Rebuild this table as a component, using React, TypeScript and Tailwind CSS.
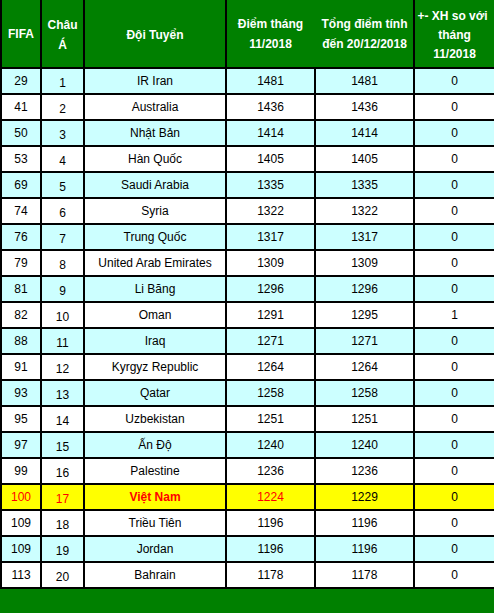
const ROWS = [
  ["29", "1", "IR Iran", "1481", "1481", "0"],
  ["41", "2", "Australia", "1436", "1436", "0"],
  ["50", "3", "Nhật Bản", "1414", "1414", "0"],
  ["53", "4", "Hàn Quốc", "1405", "1405", "0"],
  ["69", "5", "Saudi Arabia", "1335", "1335", "0"],
  ["74", "6", "Syria", "1322", "1322", "0"],
  ["76", "7", "Trung Quốc", "1317", "1317", "0"],
  ["79", "8", "United Arab Emirates", "1309", "1309", "0"],
  ["81", "9", "Li Băng", "1296", "1296", "0"],
  ["82", "10", "Oman", "1291", "1295", "1"],
  ["88", "11", "Iraq", "1271", "1271", "0"],
  ["91", "12", "Kyrgyz Republic", "1264", "1264", "0"],
  ["93", "13", "Qatar", "1258", "1258", "0"],
  ["95", "14", "Uzbekistan", "1251", "1251", "0"],
  ["97", "15", "Ấn Độ", "1240", "1240", "0"],
  ["99", "16", "Palestine", "1236", "1236", "0"],
  ["100", "17", "Việt Nam", "1224", "1229", "0"],
  ["109", "18", "Triều Tiên", "1196", "1196", "0"],
  ["109", "19", "Jordan", "1196", "1196", "0"],
  ["113", "20", "Bahrain", "1178", "1178", "0"],
];

const cols = "grid grid-cols-[40px_43px_142px_89px_99px_81px]";

export default function App() {
  return (
    <div
      className="w-[494px] h-[613px] bg-white text-black"
      style={{ fontFamily: '"Liberation Sans", Arial, sans-serif' }}>
      {/* header */}
      <div className={`${cols} h-[67px] bg-[#008000] text-white font-bold text-[12px] leading-[20px] text-center whitespace-nowrap`}>
        <div className="border-l-2 border-black flex items-center justify-center">FIFA</div>
        <div className="border-l-2 border-black flex items-center justify-center pt-[2px]">
          Châu
          <br />Á
        </div>
        <div className="border-l-2 border-black flex items-center justify-center pt-[3px]">Đội Tuyển</div>
        <div className="border-l-2 border-black flex items-center justify-center">
          Điểm tháng
          <br />
          11/2018
        </div>
        <div className="border-l-2 border-[#008000] flex items-center justify-center">
          Tổng điểm tính
          <br />
          đến 20/12/2018
        </div>
        <div className="border-l-2 border-black flex items-center justify-center pt-[3px] leading-[19px]">
          <span>
            <span className="pr-[4px]">+- XH so với</span>
            <br />
            tháng
            <br />
            11/2018
          </span>
        </div>
      </div>

      {/* body */}
      <div className="border-b-2 border-black">
        {ROWS.map((r, i) => {
          const vn = r[2] === "Việt Nam";
          const bg = vn ? "bg-[#ffff00]" : i % 2 === 0 ? "bg-[#ccffff]" : "bg-white";
          return (
            <div key={i} className={`${cols} h-[26px] border-t-2 border-black text-[12px] ${bg}`}>
              <div className={`border-l-2 border-black flex items-center justify-center ${vn ? "text-[#ff0000]" : ""}`}>
                {r[0]}
              </div>
              <div className={`border-l-2 border-black flex items-center justify-center pt-[3px] ${vn ? "text-[#ff0000]" : ""}`}>
                {r[1]}
              </div>
              <div className={`border-l-2 border-black flex items-center justify-center ${vn ? "text-[#ff0000] font-bold" : ""}`}>
                {r[2]}
              </div>
              <div className={`border-l-2 border-black flex items-center justify-center ${vn ? "text-[#ff0000]" : ""}`}>
                {r[3]}
              </div>
              <div className="border-l-2 border-black flex items-center justify-center">{r[4]}</div>
              <div className="border-l-2 border-black flex items-center justify-center">{r[5]}</div>
            </div>
          );
        })}
      </div>

      {/* footer band */}
      <div className="h-[24px] bg-[#008000]" />
    </div>
  );
}
